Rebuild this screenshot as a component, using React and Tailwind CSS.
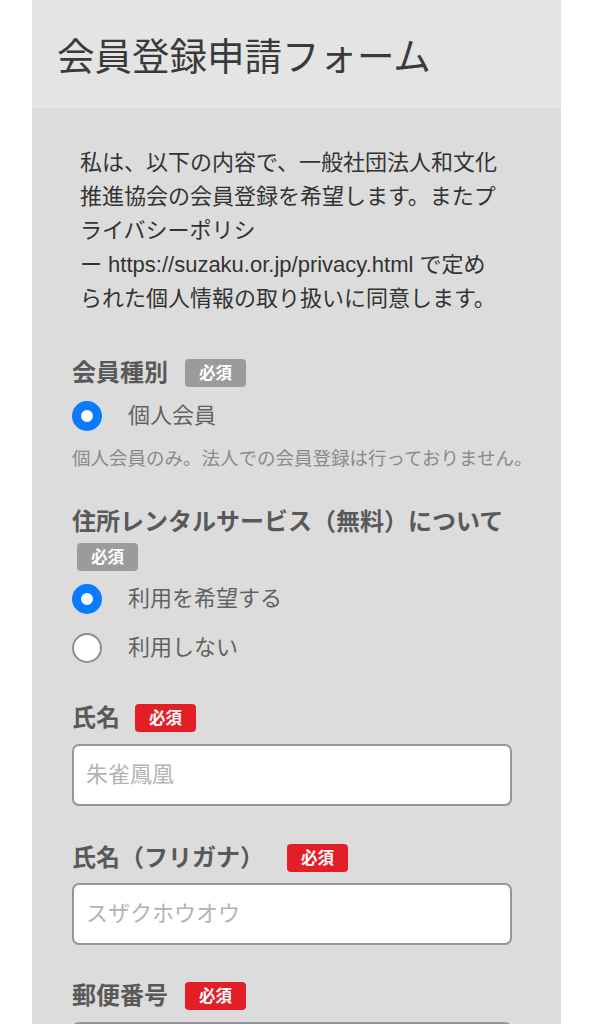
import { useState } from 'react';

const font = "font-['Liberation_Sans','Noto_Sans_CJK_JP',sans-serif]";

const Badge = ({ red, className = '' }) => (
  <span
    className={`inline-flex h-[28px] items-center rounded-[4px] px-[14px] text-[16.5px] font-bold leading-none text-white ${
      red ? 'bg-[#e41e26]' : 'bg-[#9b9b9b]'
    } ${className}`}
  >
    必須
  </span>
);

const Radio = ({ checked, label, onClick, className = '' }) => (
  <button type="button" onClick={onClick} className={`flex h-[30px] items-center gap-[26px] text-left ${className}`}>
    <span
      className={`box-border block h-[30px] w-[30px] shrink-0 rounded-full bg-white ${
        checked ? 'border-[9px] border-[#0a7bff]' : 'border-2 border-[#8e8e8e]'
      }`}
    />
    <span className="text-[22px] leading-[30px] text-[#626262]">{label}</span>
  </button>
);

const TextInput = ({ placeholder, className = '' }) => (
  <input
    type="text"
    placeholder={placeholder}
    className={`block h-[62px] w-[440px] rounded-[7px] border-2 border-[#969696] bg-white pl-[12px] text-[22px] text-[#333] outline-none placeholder:text-[#b3b3b3] ${className}`}
  />
);

const intro = [
  '私は、以下の内容で、一般社団法人和文化',
  '推進協会の会員登録を希望します。またプ',
  'ライバシーポリシ',
  'ー https://suzaku.or.jp/privacy.html で定め',
  'られた個人情報の取り扱いに同意します。',
];

const App = () => {
  const [rental, setRental] = useState('yes');

  return (
    <div className={`min-h-screen bg-white px-8 ${font}`}>
      <div className="flex h-[108px] items-center bg-[#e4e4e4] pl-[25px] pt-[8px]">
        <h1 className="text-[37.5px] font-normal leading-none text-[#3a3a3a]">会員登録申請フォーム</h1>
      </div>

      <div className="min-h-[916px] bg-[#dcdcdc] px-[40px] pt-[38px]">
        <div className="pl-2 text-[22px] leading-[34px] text-[#333]">
          {intro.map((line) => (
            <div key={line}>{line}</div>
          ))}
        </div>

        <div className="mt-[41px] flex h-[32px] items-center gap-[17px]">
          <span className="text-[24px] font-bold text-[#595959]">会員種別</span>
          <Badge />
        </div>
        <Radio checked label="個人会員" className="mt-[12px]" />
        <p className="mt-[15px] whitespace-nowrap text-[18.5px] leading-[26px] text-[#8a8a8a]">
          個人会員のみ。法人での会員登録は行っておりません。
        </p>

        <div className="mt-[34px] text-[24px] font-bold leading-[32px] text-[#595959]">
          住所レンタルサービス（無料）について
        </div>
        <Badge className="ml-[5px] mt-[5px]" />
        <div className="mt-[13px] flex flex-col gap-[19px]">
          <Radio checked={rental === 'yes'} label="利用を希望する" onClick={() => setRental('yes')} />
          <Radio checked={rental === 'no'} label="利用しない" onClick={() => setRental('no')} />
        </div>

        <div className="mt-[39px] flex h-[32px] items-center gap-[15px]">
          <span className="text-[24px] font-bold text-[#595959]">氏名</span>
          <Badge red />
        </div>
        <TextInput placeholder="朱雀鳳凰" className="mt-[10px]" />

        <div className="mt-[36px] flex h-[32px] items-center gap-[23px]">
          <span className="text-[24px] font-bold text-[#595959]">氏名（フリガナ）</span>
          <Badge red />
        </div>
        <TextInput placeholder="スザクホウオウ" className="mt-[9px]" />

        <div className="mt-[35px] flex h-[32px] items-center gap-[17px]">
          <span className="text-[24px] font-bold text-[#595959]">郵便番号</span>
          <Badge red />
        </div>
        <TextInput placeholder="" className="mt-[10px]" />
      </div>
    </div>
  );
};

export default App;
